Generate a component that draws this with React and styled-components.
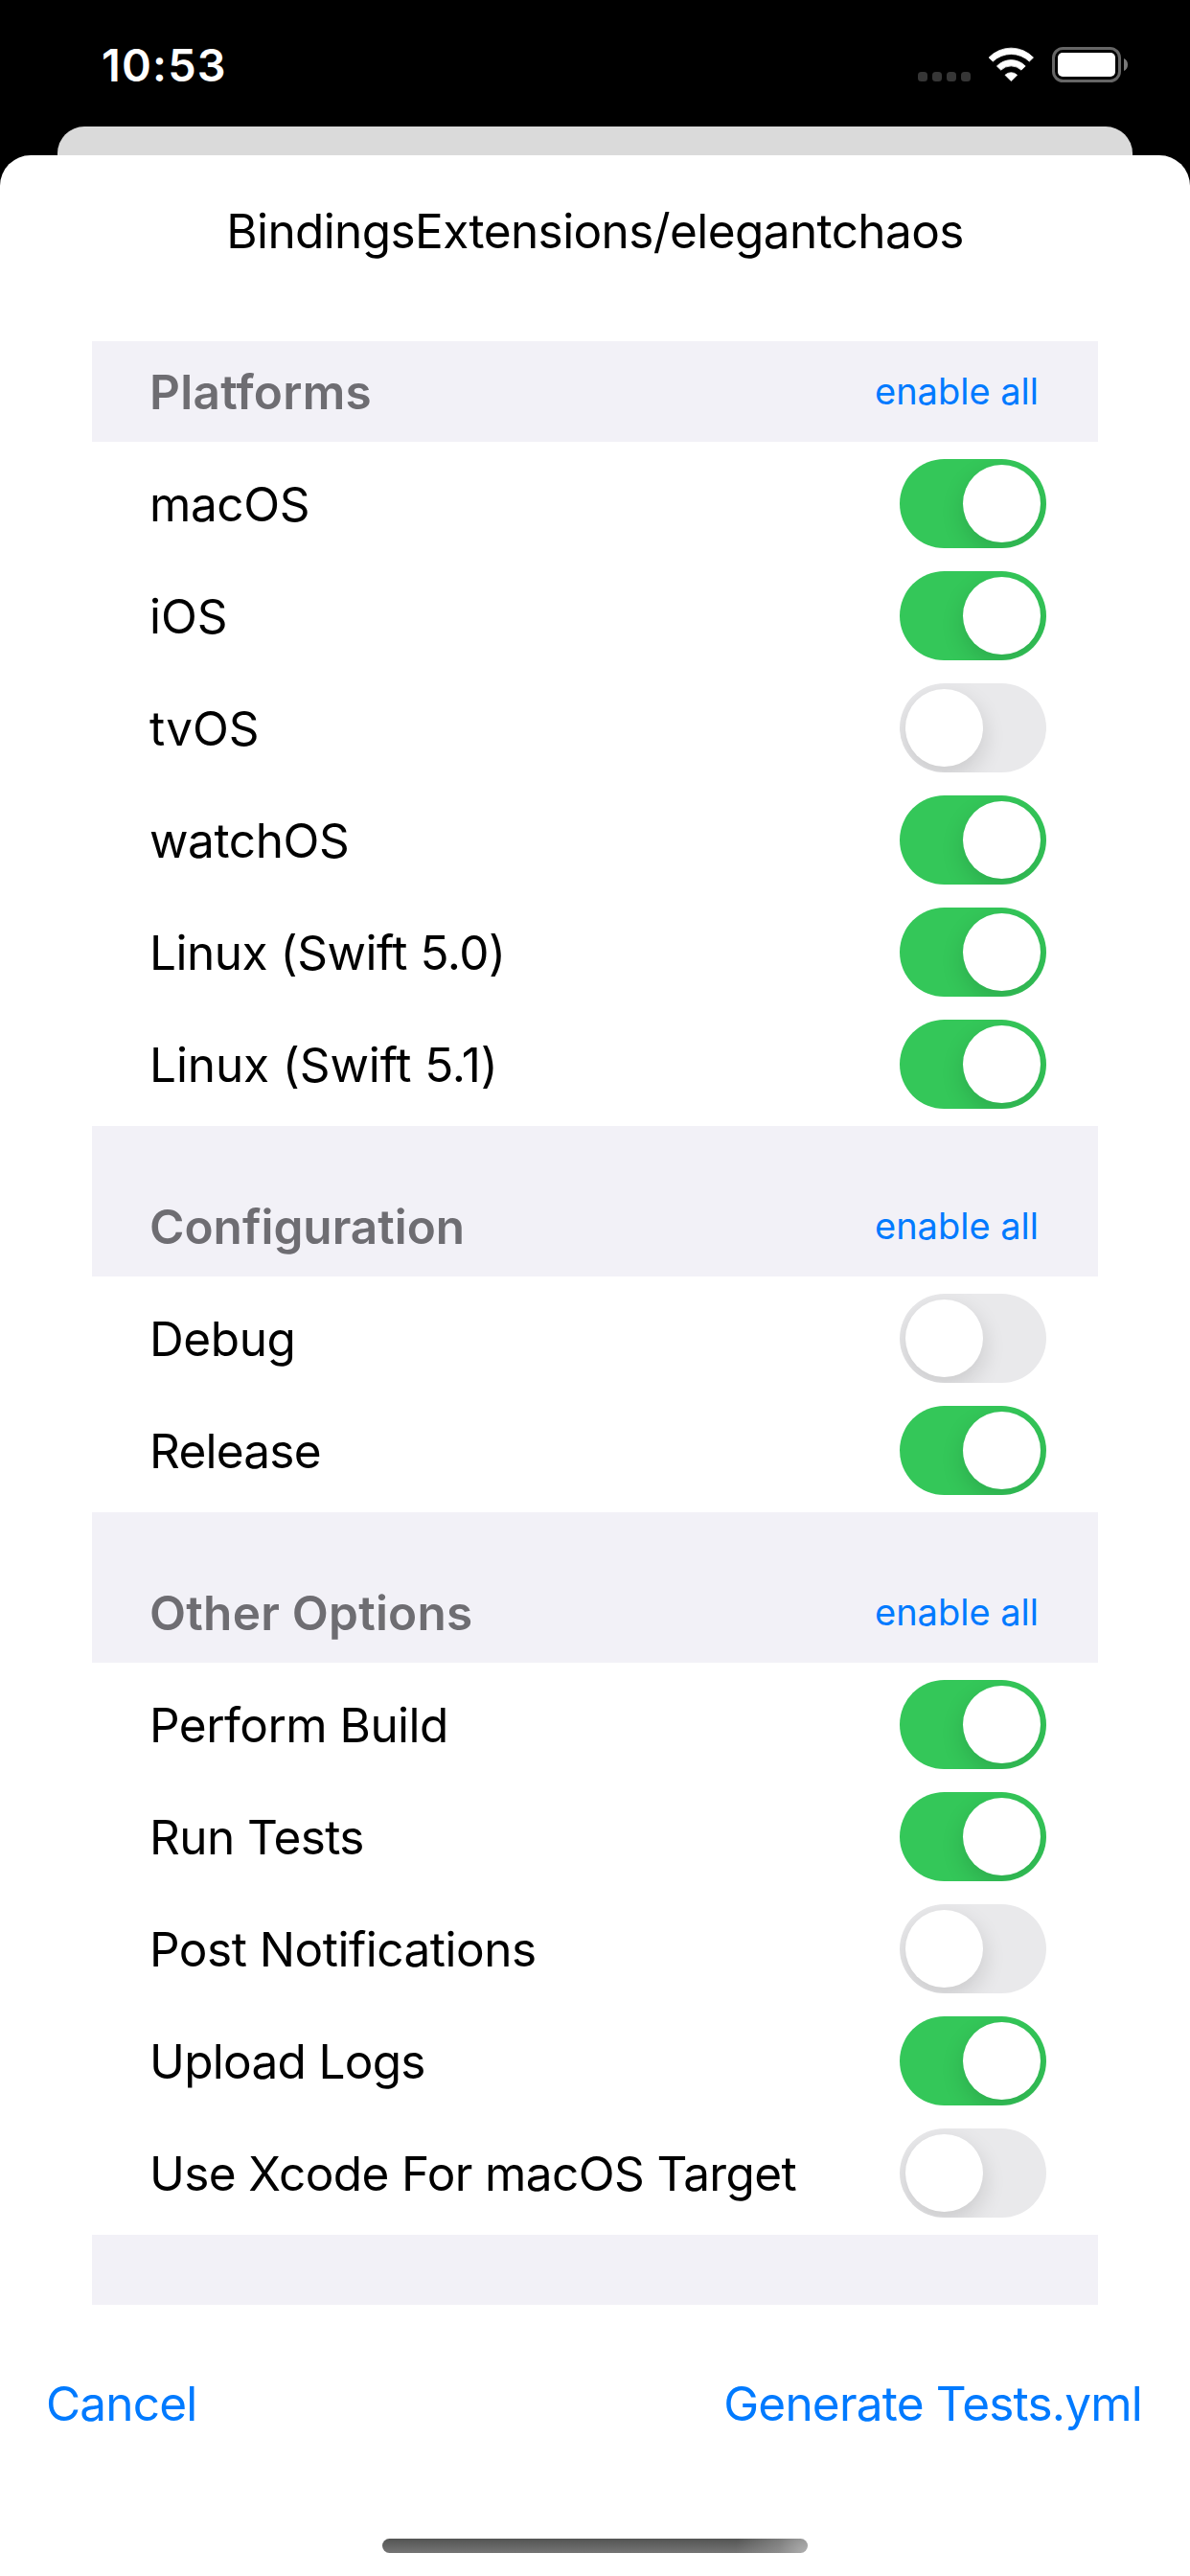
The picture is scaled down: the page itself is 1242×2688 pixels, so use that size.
import React, { useState } from 'react';
import styled, { createGlobalStyle } from 'styled-components';

const GlobalStyle = createGlobalStyle`
  *, *::before, *::after { box-sizing: border-box; }
  body {
    margin: 0;
    background: #000;
    font-family: Inter, "Liberation Sans", sans-serif;
  }
  button {
    margin: 0;
    padding: 0;
    border: 0;
    background: none;
    font-family: inherit;
    cursor: pointer;
  }
`;

const Screen = styled.div`
  display: flex;
  flex-direction: column;
  width: 1242px;
  height: 2688px;
  overflow: hidden;
  background: #000;
`;

const StatusBar = styled.header`
  flex: none;
  display: flex;
  justify-content: space-between;
  height: 132px;
  padding: 38px 65px 0 106px;
`;

const Clock = styled.time`
  font-size: 46.8px;
  font-weight: 600;
  line-height: 60px;
  letter-spacing: 1.2px;
  color: #fff;
`;

const StatusIcons = styled.div`
  display: flex;
  align-items: flex-start;
  padding-top: 11px;
`;

const SignalDots = styled.div`
  display: flex;
  gap: 5px;
  padding-top: 26px;
  margin-right: 18px;
`;

const Dot = styled.i`
  width: 10px;
  height: 10px;
  border-radius: 3.5px;
  background: #363636;
`;

const WifiIcon = styled.svg`
  display: block;
  margin-right: 18px;
`;

const BatteryIcon = styled.svg`
  display: block;
`;

const CardBehind = styled.div`
  flex: none;
  height: 30px;
  margin: 0 60px;
  border-radius: 28px 28px 0 0;
  background: #dadada;
`;

const Sheet = styled.main`
  flex: 1;
  display: flex;
  flex-direction: column;
  border-radius: 32px 32px 0 0;
  background: #fff;
`;

const Title = styled.h1`
  flex: none;
  height: 194px;
  margin: 0;
  padding-top: 49px;
  font-size: 49.5px;
  font-weight: 400;
  line-height: 60px;
  letter-spacing: -0.6px;
  text-align: center;
  color: #000;
`;

const OptionList = styled.div`
  flex: none;
  display: flex;
  flex-direction: column;
  height: 2049px;
  margin: 0 96px;
  background: #f2f1f7;
`;

const SectionHeader = styled.div`
  display: flex;
  align-items: flex-end;
  justify-content: space-between;
  height: ${(p) => (p.$first ? 105 : 157)}px;
  padding: 0 62px 22px 60px;
`;

const SectionTitle = styled.h2`
  margin: 0;
  font-size: 49.5px;
  font-weight: 600;
  line-height: 60px;
  letter-spacing: ${(p) => p.$tracking}px;
  color: #6e6d72;
`;

const EnableAll = styled.button`
  margin-bottom: 6px;
  font-size: 38px;
  line-height: 50px;
  color: #007aff;
`;

const Rows = styled.div`
  display: flex;
  flex-direction: column;
  gap: 24px;
  padding: 18px 54px 18px 60px;
  background: #fff;
`;

const Row = styled.label`
  display: flex;
  justify-content: space-between;
  height: 93px;
`;

const RowLabel = styled.span`
  font-size: 49.5px;
  line-height: 94px;
  letter-spacing: ${(p) => p.$tracking}px;
  white-space: nowrap;
  color: #000;
`;

const Track = styled.button`
  display: flex;
  justify-content: ${(p) => (p.$on ? 'flex-end' : 'flex-start')};
  align-items: center;
  width: 153px;
  height: 93px;
  padding: 0 6px;
  border-radius: 46.5px;
  overflow: hidden;
  background: ${(p) => (p.$on ? '#34c759' : '#e9e9eb')};
`;

const Thumb = styled.span`
  width: 81px;
  height: 81px;
  border-radius: 50%;
  background: #fff;
  box-shadow: 0 9px 24px rgba(0, 0, 0, 0.14);
`;

const Footer = styled.footer`
  flex: 1;
  display: flex;
  align-items: flex-start;
  justify-content: space-between;
  padding: 73px 50px 0 48px;
`;

const FooterButton = styled.button`
  font-size: 49.5px;
  line-height: 60px;
  letter-spacing: -0.8px;
  color: #007aff;
`;

const HomeIndicator = styled.div`
  flex: none;
  align-self: center;
  width: 444px;
  height: 15px;
  margin-bottom: 24px;
  border-radius: 7.5px;
  background:
    radial-gradient(circle 75px at 100% 100%, #b0b0b0 0%, rgba(160, 160, 160, 0.55) 40%, rgba(120, 120, 120, 0) 100%),
    linear-gradient(#535453, #757575);
`;

const SECTIONS = [
  {
    title: 'Platforms',
    tracking: 0.3,
    options: [
      { label: 'macOS', on: true, tracking: -0.4 },
      { label: 'iOS', on: true, tracking: 0 },
      { label: 'tvOS', on: false, tracking: 0 },
      { label: 'watchOS', on: true, tracking: -0.4 },
      { label: 'Linux (Swift 5.0)', on: true, tracking: -0.47 },
      { label: 'Linux (Swift 5.1)', on: true, tracking: -0.1 },
    ],
  },
  {
    title: 'Configuration',
    tracking: 0,
    options: [
      { label: 'Debug', on: false, tracking: -0.4 },
      { label: 'Release', on: true, tracking: -0.75 },
    ],
  },
  {
    title: 'Other Options',
    tracking: 0.24,
    options: [
      { label: 'Perform Build', on: true, tracking: -0.54 },
      { label: 'Run Tests', on: true, tracking: -0.6 },
      { label: 'Post Notifications', on: false, tracking: -0.5 },
      { label: 'Upload Logs', on: true, tracking: -0.7 },
      { label: 'Use Xcode For macOS Target', on: false, tracking: -0.61 },
    ],
  },
];

function Switch({ on, onToggle, label }) {
  return (
    <Track type="button" role="switch" aria-checked={on} aria-label={label} $on={on} onClick={onToggle}>
      <Thumb />
    </Track>
  );
}

function Wifi() {
  return (
    <WifiIcon width="49" height="37" viewBox="0 0 49 37" fill="#fff" stroke="#fff" strokeWidth="0.8" strokeLinejoin="round">
      <path d="M1.1 11.1A32 32 0 0 1 47.5 11.1L43.3 15.1A27.5 27.5 0 0 0 5.3 15.1Z" />
      <path d="M9.4 20A20.6 20.6 0 0 1 39.2 20L34.9 24.1A15.4 15.4 0 0 0 13.7 24.1Z" />
      <path d="M18 29.3A9 9 0 0 1 30.6 29.3L24.3 35.6Z" />
    </WifiIcon>
  );
}

function Battery() {
  return (
    <BatteryIcon width="79" height="37" viewBox="0 0 79 37">
      <rect x="1.5" y="1.5" width="69" height="34" rx="10" fill="none" stroke="#666" strokeWidth="3" />
      <rect x="6" y="6" width="60" height="25" rx="5" fill="#fff" />
      <path d="M75 12C77.5 13 79 15.500 79 18.500S77.500 24 75 25Z" fill="#7a7a7a" />
    </BatteryIcon>
  );
}

export default function App() {
  const [sections, setSections] = useState(SECTIONS);

  const update = (sectionIndex, change) =>
    setSections((all) =>
      all.map((section, i) =>
        i === sectionIndex ? { ...section, options: section.options.map(change) } : section
      )
    );

  return (
    <>
      <GlobalStyle />
      <Screen>
        <StatusBar>
          <Clock>10:53</Clock>
          <StatusIcons>
            <SignalDots>
              <Dot />
              <Dot />
              <Dot />
              <Dot />
            </SignalDots>
            <Wifi />
            <Battery />
          </StatusIcons>
        </StatusBar>
        <CardBehind />
        <Sheet>
          <Title>BindingsExtensions/elegantchaos</Title>
          <OptionList>
            {sections.map((section, s) => (
              <section key={section.title}>
                <SectionHeader $first={s === 0}>
                  <SectionTitle $tracking={section.tracking}>{section.title}</SectionTitle>
                  <EnableAll type="button" onClick={() => update(s, (o) => ({ ...o, on: true }))}>
                    enable all
                  </EnableAll>
                </SectionHeader>
                <Rows>
                  {section.options.map((option, r) => (
                    <Row key={option.label} as="div">
                      <RowLabel $tracking={option.tracking}>{option.label}</RowLabel>
                      <Switch
                        on={option.on}
                        label={option.label}
                        onToggle={() => update(s, (o, i) => (i === r ? { ...o, on: !o.on } : o))}
                      />
                    </Row>
                  ))}
                </Rows>
              </section>
            ))}
          </OptionList>
          <Footer>
            <FooterButton type="button">Cancel</FooterButton>
            <FooterButton type="button">Generate Tests.yml</FooterButton>
          </Footer>
          <HomeIndicator />
        </Sheet>
      </Screen>
    </>
  );
}
